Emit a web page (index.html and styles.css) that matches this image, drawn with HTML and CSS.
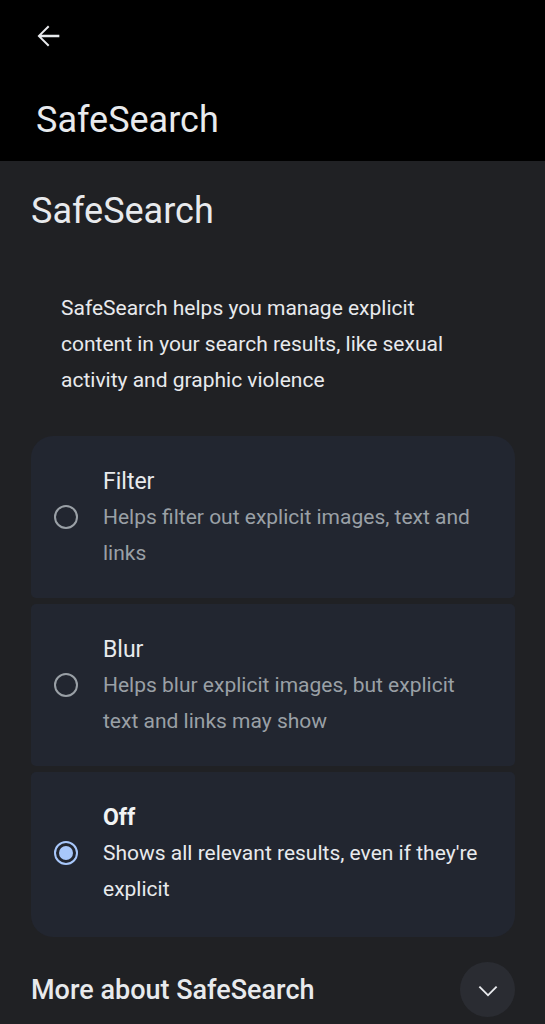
FILE: index.html
```html
<!DOCTYPE html>
<html lang="en">
<head>
<meta charset="utf-8">
<title>SafeSearch</title>
<link rel="stylesheet" href="styles.css">
</head>
<body>
  <header class="appbar">
    <button class="back" aria-label="Back">
      <svg viewBox="0 0 24 24" width="34" height="34"><path d="M20 11.2H7.4l5.6-5.6-1-1L4.6 12l7.4 7.4 1-1-5.6-5.6H20z" fill="#e8eaed"/></svg>
    </button>
    <h1 class="appbar-title">SafeSearch</h1>
  </header>

  <main class="content">
    <h2 class="page-title">SafeSearch</h2>
    <p class="intro">SafeSearch helps you manage explicit content in your search results, like sexual activity and graphic violence</p>

    <div class="options">
      <label class="option">
        <span class="radio"></span>
        <span class="option-text">
          <span class="option-title">Filter</span>
          <span class="option-desc">Helps filter out explicit images, text and links</span>
        </span>
      </label>
      <label class="option">
        <span class="radio"></span>
        <span class="option-text">
          <span class="option-title">Blur</span>
          <span class="option-desc">Helps blur explicit images, but explicit text and links may show</span>
        </span>
      </label>
      <label class="option selected">
        <span class="radio"></span>
        <span class="option-text">
          <span class="option-title">Off</span>
          <span class="option-desc">Shows all relevant results, even if they're explicit</span>
        </span>
      </label>
    </div>

    <div class="more">
      <span class="more-title">More about SafeSearch</span>
      <button class="expand" aria-label="Expand">
        <svg viewBox="0 0 24 24" width="36" height="36"><path d="M6.7 9.3 12 14.6l5.3-5.3.9.9-6.2 6.2-6.2-6.2z" fill="#e8eaed"/></svg>
      </button>
    </div>
  </main>
</body>
</html>
```

FILE: styles.css
```css
* { box-sizing: border-box; }

html, body {
  margin: 0;
  padding: 0;
  background: #202124;
  font-family: Roboto, "Noto Sans", sans-serif;
  color: #e8eaed;
}

button {
  border: 0;
  background: none;
  padding: 0;
  cursor: pointer;
}

/* black top app bar */
.appbar {
  background: #000;
  height: 161px;
  padding: 19px 0 0 31px;
}

.back {
  width: 34px;
  height: 34px;
  display: block;
}

.appbar-title {
  margin: 45px 0 0 5px;
  font-weight: 400;
  font-size: 36px;
  line-height: 44px;
  color: #e8eaed;
}

.content {
  padding: 0 30px 0 31px;
}

.page-title {
  margin: 0;
  padding-top: 28px;
  font-weight: 400;
  font-size: 36px;
  line-height: 44px;
  color: #e8eaed;
}

.intro {
  margin: 57px 0 0 30px;
  font-size: 21px;
  line-height: 36px;
  color: #e8eaed;
  max-width: 400px;
}

/* radio option cards */
.options {
  margin-top: 38px;
  display: flex;
  flex-direction: column;
  gap: 6px;
}

.option {
  display: flex;
  align-items: flex-start;
  background: #222630;
  border-radius: 5px;
  padding: 28px 20px 27px 23px;
}

.option:first-child { border-radius: 22px 22px 5px 5px; }
.option:last-child { border-radius: 5px 5px 22px 22px; padding-bottom: 30px; }

.radio {
  flex: none;
  width: 24px;
  height: 24px;
  border: 2.5px solid #9aa0a6;
  border-radius: 50%;
  margin: 41px 25px 0 0;
  position: relative;
}

.selected .radio {
  border-color: #a8c7fa;
}

.selected .radio::after {
  content: "";
  position: absolute;
  inset: 3px;
  border-radius: 50%;
  background: #a8c7fa;
}

.option-text {
  display: flex;
  flex-direction: column;
  max-width: 390px;
}

.option-title {
  font-size: 23px;
  line-height: 35px;
  color: #e8eaed;
}

.option-desc {
  font-size: 21px;
  line-height: 36px;
  color: #9aa0a6;
}

.selected .option-title { font-weight: 700; color: #f1f3f4; }
.selected .option-desc { color: #e8eaed; }

/* expandable "more" row */
.more {
  display: flex;
  align-items: center;
  justify-content: space-between;
  margin-top: 25px;
}

.more-title {
  font-size: 27px;
  font-weight: 500;
  color: #e8eaed;
}

.expand {
  width: 55px;
  height: 55px;
  border-radius: 50%;
  background: #2a2c32;
  display: flex;
  align-items: center;
  justify-content: center;
}
```
